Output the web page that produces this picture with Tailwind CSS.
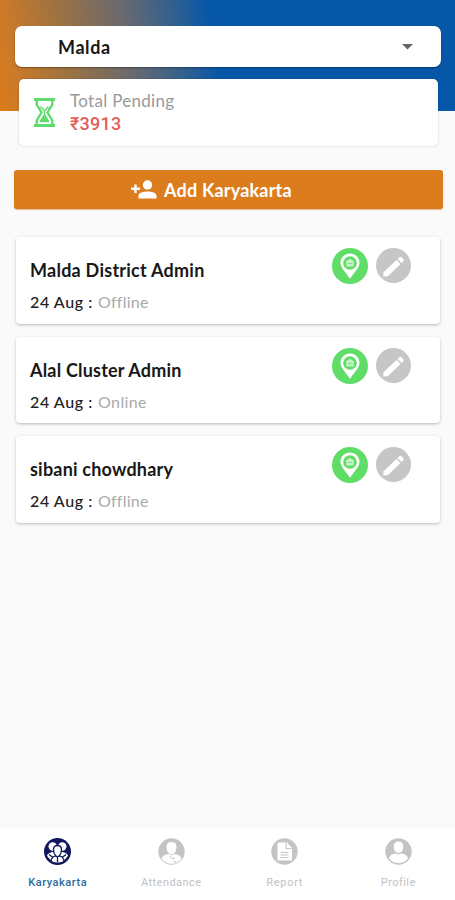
<!DOCTYPE html>
<html lang="en">
<head>
<meta charset="utf-8">
<meta name="viewport" content="width=device-width, initial-scale=1">
<title>Karyakarta</title>
<script src="https://cdn.jsdelivr.net/npm/@tailwindcss/browser@4"></script>
</head>
<body class="bg-[#fafafa] font-[Lato,sans-serif]">
<svg class="hidden">
  <symbol id="pin" viewBox="0 0 36 36">
    <circle cx="18" cy="18" r="18" fill="#5fdd66"/>
    <path fill="#fff" fill-rule="evenodd" d="M18 5.500c-5.300 0-9.500 4.100-9.500 9.300 0 4.500 3.800 8 9.500 16 5.700-8 9.500-11.500 9.500-16 0-5.200-4.200-9.300-9.500-9.300Zm0 2.700a6.800 6.800 0 1 1 0 13.600a6.800 6.800 0 0 1 0-13.600Z"/>
    <path fill="#c5f3c8" d="M13.500 13.700 18 10.800l4.500 2.900-.8.800V18.500h-7.400v-4Z"/>
    <path stroke="#5fdd66" stroke-width=".7" d="M16 15.500h4"/>
  </symbol>
  <symbol id="edit" viewBox="0 0 35 35">
    <circle cx="17.500" cy="17.500" r="17.500" fill="#c6c6c6"/>
    <path fill="#fff" d="M7.500 24.300 20.500 12l4 4L11.800 28.300l-4.600.2ZM21.600 10.900l1.900-1.800q.8-.7 1.600 0l2.400 2.400q.7.800 0 1.600l-1.900 1.800Z"/>
  </symbol>
</svg>
<div class="flex flex-col h-[900px] w-[455px] bg-[linear-gradient(80deg,#db7c1a_0px,#cc7a28_20px,#a0733f_70px,#69696f_138px,#2f6090_190px,#0757a8_222px)] bg-no-repeat bg-[length:455px_111px]">
  <header class="pt-[26px] pl-[15px] pr-[14px]">
    <div class="h-[41px] rounded-[7px] bg-white pl-[43px] pr-[28px] flex items-center justify-between shadow-[0_1px_2px_rgba(0,0,0,.35)]">
      <span class="text-[18px] font-bold leading-none tracking-[.6px] text-[#181818]">Malda</span>
      <svg class="w-[11px] h-[6px] mt-px" viewBox="0 0 11 6"><path d="M0 0h11L5.500 5.500Z" fill="#666"/></svg>
    </div>
    <section class="mt-[12px] ml-[4px] w-[419px] h-[67px] rounded-[5px] bg-white shadow-[0_0_2px_rgba(0,0,0,.22)] flex items-center pl-[15px]">
      <svg class="w-[21px] h-[29px]" viewBox="0 0 21 29" fill="none" stroke="#5edb6d">
        <path stroke-width="2.800" d="M0 1.500h21M0 27.500h21"/>
        <path stroke-width="2.400" d="M2.700 2v4.500L7.500 14.500l-4.800 8V27M18.300 2v4.500L13.500 14.500l4.800 8V27"/>
        <path stroke-width="1.400" d="M6.500 8.500 10.500 13l4-4.500"/>
        <path stroke="none" fill="#5edb6d" d="M9.800 12.500h1.400v4L15 22.500v1.800H6v-1.800l3.800-6Z"/>
      </svg>
      <div class="ml-[15px] -mt-[2px] flex flex-col">
        <span class="text-[17px] leading-[23px] tracking-[.3px] text-[#999]">Total Pending</span>
        <span class="font-[Roboto,sans-serif] text-[18px] leading-[23px] tracking-[.2px] font-medium text-[#df6058]">₹3913</span>
      </div>
    </section>
  </header>
  <button class="mt-[24px] ml-[14px] w-[429px] h-[39px] shrink-0 rounded-[3px] bg-[#dc7d1d] shadow-[0_1px_1px_rgba(180,90,0,.4)] flex items-center pl-[117px] text-white">
    <svg class="w-[26px] h-[19px]" viewBox="0 0 26 19" fill="#fff"><circle cx="16.500" cy="5" r="4.700"/><path d="M7.500 18.500v-2.700c0-3 5-4.300 9-4.300s9 1.300 9 4.300v2.700ZM3.300 4.500h2.400v3h3.400v2.400H5.700v3H3.300v-3H0V7.500h3.300Z"/></svg>
    <span class="ml-[7px] text-[18px] font-bold leading-none tracking-[.2px] whitespace-nowrap">Add Karyakarta</span>
  </button>
  <main class="mt-[28px] ml-[16px] w-[424px] flex flex-col gap-[13px] grow">
    <article class="h-[86.500px] rounded-[4px] bg-white shadow-[0_1px_3px_rgba(0,0,0,.26)] flex justify-between pl-[14px] pr-[29px]">
      <div class="pt-[22px] flex flex-col">
        <h2 class="text-[18px] leading-[22px] tracking-[.25px] font-bold text-[#181818]">Malda District Admin</h2>
        <p class="mt-[11px] flex text-[16px] leading-[20px] tracking-[.25px]"><span class="w-[68px] tracking-[.6px] font-medium text-[#222]">24 Aug :</span><span class="text-[#aaa]">Offline</span></p>
      </div>
      <div class="pt-[11px] flex gap-[8px]"><svg class="size-[36px]"><use href="#pin"/></svg><svg class="size-[35px]"><use href="#edit"/></svg></div>
    </article>
    <article class="h-[86.500px] rounded-[4px] bg-white shadow-[0_1px_3px_rgba(0,0,0,.26)] flex justify-between pl-[14px] pr-[29px]">
      <div class="pt-[22px] flex flex-col">
        <h2 class="text-[18px] leading-[22px] tracking-[.2px] font-bold text-[#181818]">Alal Cluster Admin</h2>
        <p class="mt-[11px] flex text-[16px] leading-[20px] tracking-[.4px]"><span class="w-[68px] tracking-[.6px] font-medium text-[#222]">24 Aug :</span><span class="text-[#aaa]">Online</span></p>
      </div>
      <div class="pt-[11px] flex gap-[8px]"><svg class="size-[36px]"><use href="#pin"/></svg><svg class="size-[35px]"><use href="#edit"/></svg></div>
    </article>
    <article class="h-[86.500px] rounded-[4px] bg-white shadow-[0_1px_3px_rgba(0,0,0,.26)] flex justify-between pl-[14px] pr-[29px]">
      <div class="pt-[22px] flex flex-col">
        <h2 class="text-[18px] leading-[22px] tracking-[.2px] font-bold text-[#181818]">sibani chowdhary</h2>
        <p class="mt-[11px] flex text-[16px] leading-[20px] tracking-[.25px]"><span class="w-[68px] tracking-[.6px] font-medium text-[#222]">24 Aug :</span><span class="text-[#aaa]">Offline</span></p>
      </div>
      <div class="pt-[11px] flex gap-[8px]"><svg class="size-[36px]"><use href="#pin"/></svg><svg class="size-[35px]"><use href="#edit"/></svg></div>
    </article>
  </main>
  <nav class="h-[72px] bg-white grid grid-cols-4 pl-px text-[11px] leading-[14px] tracking-[.45px] text-[#c2c2c2] text-center font-[Roboto,sans-serif]">
    <a class="flex flex-col items-center pt-[10px] gap-[11px] font-medium tracking-[.55px] text-[#2b6ba0]">
      <svg class="size-[27px]" viewBox="0 0 27 27"><circle cx="13.500" cy="13.500" r="13.500" fill="#10175c"/><g fill="#fff"><circle cx="8.700" cy="8.500" r="4.200"/><circle cx="18.300" cy="8.500" r="4.200"/><path d="M3 17.500q1.500-3 5.500-3.500h10q4 .5 5.500 3.500-3 6-10.500 7Q6 23.500 3 17.500Z"/></g><g stroke="#10175c" fill="#fff" stroke-width="1.300"><path d="M7 23.500q.5-4.500 4-5.500h5q3.500 1 4 5.500-6.500 3.500-13 0Z"/><path d="M9.500 11.500q0-4 4-4t4 4q0 4-2 6l-2 1.500-2-1.500q-2-2-2-6Z"/><path fill="none" d="M5 16.500l4 3M22 16.500l-4 3M13.500 19v5"/></g></svg>Karyakarta</a>
    <a class="flex flex-col items-center pt-[10px] gap-[11px]">
      <svg class="size-[27px]" viewBox="0 0 27 27"><circle cx="13.500" cy="13.500" r="13.200" fill="#c4c4c4"/><g fill="#fff"><path d="M8.500 9q0-5 5-5t5 5q0 4-2.500 6.500-2.500 2-5 0Q8.500 13 8.500 9Z"/><path d="M3.500 21q1-4.500 7-5l3 1.500 3-1.500q6 .5 7 5-4 4.700-10 4.700t-10-4.700Z"/></g><path d="M12 18l2.500 3 2.500-1.500M15 23l3 1" fill="none" stroke="#c4c4c4"/></svg>Attendance</a>
    <a class="flex flex-col items-center pt-[10px] gap-[11px] tracking-[.7px]">
      <svg class="size-[27px]" viewBox="0 0 27 27"><circle cx="13.500" cy="13.500" r="13.200" fill="#c4c4c4"/><path fill="#fff" d="M8 4.500h8l5 5.500v12.500H6.500V6Q6.500 4.500 8 4.500Z"/><path d="M15 5v5.500h5.500M9.500 14.500h8M9.500 17h8M9.500 19.500h8" fill="none" stroke="#c4c4c4" stroke-width="1.100"/></svg>Report</a>
    <a class="flex flex-col items-center pt-[10px] gap-[11px]">
      <svg class="size-[27px]" viewBox="0 0 27 27"><circle cx="13.500" cy="13.500" r="13.200" fill="#c4c4c4"/><path fill="#fff" d="M8.700 8.500q0-5 4.800-5t4.800 5q0 3.500-2 5.500-2.800 2-5.600 0-2-2-2-5.500ZM4 20.500q1-4.500 6.500-5l3 1 3-1q5.500.5 6.500 5-3.500 4.500-9.500 4.500T4 20.500Z"/></svg>Profile</a>
  </nav>
</div>
</body>
</html>
